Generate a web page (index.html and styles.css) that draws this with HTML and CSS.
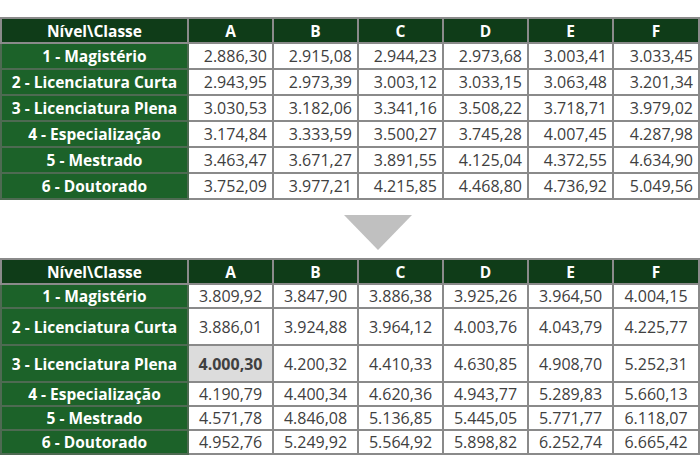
FILE: index.html
```html
<!DOCTYPE html>
<html lang="pt-BR">
<head>
<meta charset="utf-8">
<link rel="stylesheet" href="styles.css">
</head>
<body>
<div class="page">
  <table class="grid grid-old">
    <colgroup><col class="c-label"><col class="c-val"><col class="c-val"><col class="c-val"><col class="c-val"><col class="c-val"><col class="c-last"></colgroup>
    <thead>
      <tr><th>Nível\Classe</th><th>A</th><th>B</th><th>C</th><th>D</th><th>E</th><th>F</th></tr>
    </thead>
    <tbody>
      <tr><th>1 - Magistério</th><td>2.886,30</td><td>2.915,08</td><td>2.944,23</td><td>2.973,68</td><td>3.003,41</td><td>3.033,45</td></tr>
      <tr><th>2 - Licenciatura Curta</th><td>2.943,95</td><td>2.973,39</td><td>3.003,12</td><td>3.033,15</td><td>3.063,48</td><td>3.201,34</td></tr>
      <tr><th>3 - Licenciatura Plena</th><td>3.030,53</td><td>3.182,06</td><td>3.341,16</td><td>3.508,22</td><td>3.718,71</td><td>3.979,02</td></tr>
      <tr><th>4 - Especialização</th><td>3.174,84</td><td>3.333,59</td><td>3.500,27</td><td>3.745,28</td><td>4.007,45</td><td>4.287,98</td></tr>
      <tr><th>5 - Mestrado</th><td>3.463,47</td><td>3.671,27</td><td>3.891,55</td><td>4.125,04</td><td>4.372,55</td><td>4.634,90</td></tr>
      <tr><th>6 - Doutorado</th><td>3.752,09</td><td>3.977,21</td><td>4.215,85</td><td>4.468,80</td><td>4.736,92</td><td>5.049,56</td></tr>
    </tbody>
  </table>

  <div class="arrow"></div>

  <table class="grid grid-new">
    <colgroup><col class="c-label"><col class="c-val"><col class="c-val"><col class="c-val"><col class="c-val"><col class="c-val"><col class="c-last"></colgroup>
    <thead>
      <tr><th>Nível\Classe</th><th>A</th><th>B</th><th>C</th><th>D</th><th>E</th><th>F</th></tr>
    </thead>
    <tbody>
      <tr class="r-short"><th>1 - Magistério</th><td>3.809,92</td><td>3.847,90</td><td>3.886,38</td><td>3.925,26</td><td>3.964,50</td><td>4.004,15</td></tr>
      <tr class="r-tall"><th>2 - Licenciatura Curta</th><td>3.886,01</td><td>3.924,88</td><td>3.964,12</td><td>4.003,76</td><td>4.043,79</td><td>4.225,77</td></tr>
      <tr class="r-tall"><th>3 - Licenciatura Plena</th><td class="hl">4.000,30</td><td>4.200,32</td><td>4.410,33</td><td>4.630,85</td><td>4.908,70</td><td>5.252,31</td></tr>
      <tr class="r-short"><th>4 - Especialização</th><td>4.190,79</td><td>4.400,34</td><td>4.620,36</td><td>4.943,77</td><td>5.289,83</td><td>5.660,13</td></tr>
      <tr class="r-short"><th>5 - Mestrado</th><td>4.571,78</td><td>4.846,08</td><td>5.136,85</td><td>5.445,05</td><td>5.771,77</td><td>6.118,07</td></tr>
      <tr class="r-short"><th>6 - Doutorado</th><td>4.952,76</td><td>5.249,92</td><td>5.564,92</td><td>5.898,82</td><td>6.252,74</td><td>6.665,42</td></tr>
    </tbody>
  </table>
</div>
</body>
</html>
```

FILE: styles.css
```css
html, body {
  margin: 0;
  padding: 0;
  background: #ffffff;
}

.page {
  padding-top: 17px;
  font-family: "Open Sans", "Liberation Sans", sans-serif;
}

.grid {
  border-collapse: collapse;
  table-layout: fixed;
  width: 698px;
  border: 2px solid #8a8a8a;
}

.c-label { width: 187px; }
.c-val { width: 85px; }
.c-last { width: 86px; }

.grid th,
.grid td {
  border: 2px solid #8a8a8a;
  padding: 0;
  white-space: nowrap;
  line-height: 18px;
}

.grid thead th {
  background: #0f3c18;
  color: #ffffff;
  font-weight: 700;
  font-size: 15.5px;
  text-align: center;
  height: 23px;
}

.grid tbody th {
  background: #1c6229;
  color: #ffffff;
  font-weight: 700;
  font-size: 15.5px;
  text-align: center;
  border-color: #4e6a52;
}

.grid td {
  color: #404040;
  font-size: 16px;
  background: #ffffff;
}

.grid-old tbody tr { height: 26px; }
.grid-old td {
  text-align: right;
  padding-right: 5px;
}

.grid-new td { text-align: center; }
.grid-new .r-short { height: 24px; }
.grid-new .r-tall { height: 37px; }

.grid-new td.hl {
  background: #dcdcdc;
  font-weight: 700;
}

.arrow {
  width: 0;
  height: 0;
  margin: 15px 0 8px 344px;
  border-left: 34px solid transparent;
  border-right: 34px solid transparent;
  border-top: 35px solid #c0c0c0;
}
```
